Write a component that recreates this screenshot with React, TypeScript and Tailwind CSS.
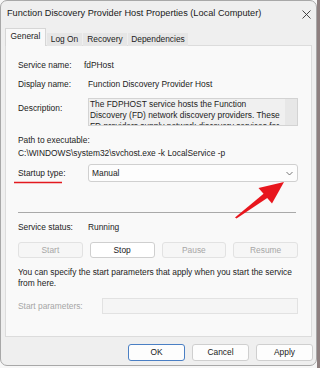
import React from "react";

const font = { fontFamily: '"Liberation Sans", Arial, sans-serif' };

function Btn({ label, disabled, primary, className = "" }: { label: string; disabled?: boolean; primary?: boolean; className?: string }) {
  const base = "flex items-center justify-center rounded-[3px] border text-[8.4px] leading-none";
  const cls = disabled
    ? "border-[#e2e2e2] bg-[#f6f6f6] text-[#a6a6a6]"
    : primary
    ? "border-[#4a7fc4] bg-[#fdfdfd] text-[#1a1a1a]"
    : "border-[#cfcfcf] bg-[#fdfdfd] text-[#1a1a1a]";
  return <div className={`${base} ${cls} ${className}`}>{label}</div>;
}

export default function App() {
  return (
    <div className="relative flex h-[368px] w-[320px] bg-[#f7f7f7] overflow-hidden" style={font}>
      <div className="flex h-[366px] w-[317px] flex-col rounded-[7px] border border-[#a8a8a8] bg-[#efefef] text-[#1c1c1c]">
        {/* title bar */}
        <div className="flex h-[26px] items-center justify-between pl-[6px] pr-[4px]">
          <span className="text-[9.2px] text-[#1a1a1a]">Function Discovery Provider Host Properties (Local Computer)</span>
          <svg width="9" height="9" viewBox="0 0 9 9" className="mr-[1px]">
            <path d="M0.5 0.5 L8.5 8.5 M8.5 0.5 L0.5 8.5" stroke="#333" strokeWidth="0.9" fill="none" />
          </svg>
        </div>
        {/* tabs */}
        <div className="relative z-10 flex h-[19px] items-end pl-[4px] text-[8.4px]">
          <div className="flex h-[18px] w-[41px] items-center justify-center border border-b-0 border-[#d6d6d6] bg-[#f9f9f9] pb-[2px]">General</div>
          <div className="ml-[1px] flex h-[13px] w-[35px] items-center justify-center bg-[#e6e6e6]">Log On</div>
          <div className="ml-[1px] flex h-[13px] w-[44px] items-center justify-center bg-[#e6e6e6]">Recovery</div>
          <div className="ml-[1px] flex h-[13px] w-[60px] items-center justify-center bg-[#e6e6e6]">Dependencies</div>
        </div>
        {/* panel */}
        <div className="-mt-[1px] ml-[4px] flex h-[292px] w-[307px] flex-col border border-[#dcdcdc] bg-[#f9f9f9] pl-[12px] pr-[13px] pt-[12px] text-[8.4px]">
          <div className="flex h-[14px] items-center">
            <span className="w-[66px]">Service name:</span>
            <span>fdPHost</span>
          </div>
          <div className="mt-[5px] flex h-[14px] items-center">
            <span className="w-[70px]">Display name:</span>
            <span>Function Discovery Provider Host</span>
          </div>
          <div className="mt-[7px] flex h-[28px]">
            <span className="mt-[4px] w-[70px]">Description:</span>
            <div className="flex h-[28px] flex-1 overflow-hidden border border-[#d3d3d3] bg-[#f0f0f0]">
              <div className="flex-1 overflow-hidden whitespace-nowrap pl-[1px] leading-[11px]">
                The FDPHOST service hosts the Function<br />
                Discovery (FD) network discovery providers. These<br />
                FD providers supply network discovery services for
              </div>
              <div className="w-[12px] bg-[#e7e7e7]" />
            </div>
          </div>
          <div className="mt-[8px] flex h-[13px] items-center">Path to executable:</div>
          <div className="flex h-[13px] items-center">C:\WINDOWS\system32\svchost.exe -k LocalService -p</div>
          <div className="mt-[4px] flex h-[18px] items-center">
            <span className="w-[70px]">Startup type:</span>
            <div className="flex h-[18px] flex-1 items-center justify-between rounded-[3px] border border-[#d0d0d0] bg-[#fdfdfd] pl-[3px] pr-[4px]">
              <span>Manual</span>
              <svg width="7" height="5" viewBox="0 0 7 5">
                <path d="M0.5 1 L3.5 4 L6.5 1" stroke="#555" strokeWidth="0.8" fill="none" />
              </svg>
            </div>
          </div>
          <div className="mt-[30px] h-[1px] w-[278px] bg-[#a9a9a9]" />
          <div className="mt-[7px] flex h-[14px] items-center">
            <span className="w-[70px]">Service status:</span>
            <span>Running</span>
          </div>
          <div className="mt-[8px] grid h-[16px] w-[280px] grid-cols-4 gap-[7px]">
            <Btn label="Start" disabled />
            <Btn label="Stop" className="border-[#c6c6c6] bg-[#ffffff]" />
            <Btn label="Pause" disabled />
            <Btn label="Resume" disabled />
          </div>
          <div className="mt-[9px] leading-[11px]">
            You can specify the start parameters that apply when you start the service<br />from here.
          </div>
          <div className="mt-[9px] flex h-[16px] items-center">
            <span className="w-[84px] text-[#a6a6a6]">Start parameters:</span>
            <div className="h-[16px] flex-1 border border-[#e2e2e2] bg-[#f5f5f5]" />
          </div>
        </div>
        {/* bottom buttons */}
        <div className="mt-[7px] flex h-[17px] justify-end gap-[7px] pr-[3px]">
          <Btn label="OK" primary className="w-[57px]" />
          <Btn label="Cancel" className="w-[57px]" />
          <Btn label="Apply" className="w-[57px]" />
        </div>
      </div>
      <div className="h-full flex-1 bg-[#8d7f7f]" />
      {/* annotations */}
      <svg className="pointer-events-none absolute left-0 top-0" width="320" height="368" viewBox="0 0 320 368">
        <line x1="14" y1="182.5" x2="62" y2="182.5" stroke="#e3191f" strokeWidth="1.5" />
        <polygon points="235,217.5 264.5,193 268,197.5 236.5,218.5" fill="#e8161d" />
        <polygon points="284,182 258.5,188 272,203.5" fill="#e8161d" />
      </svg>
    </div>
  );
}
